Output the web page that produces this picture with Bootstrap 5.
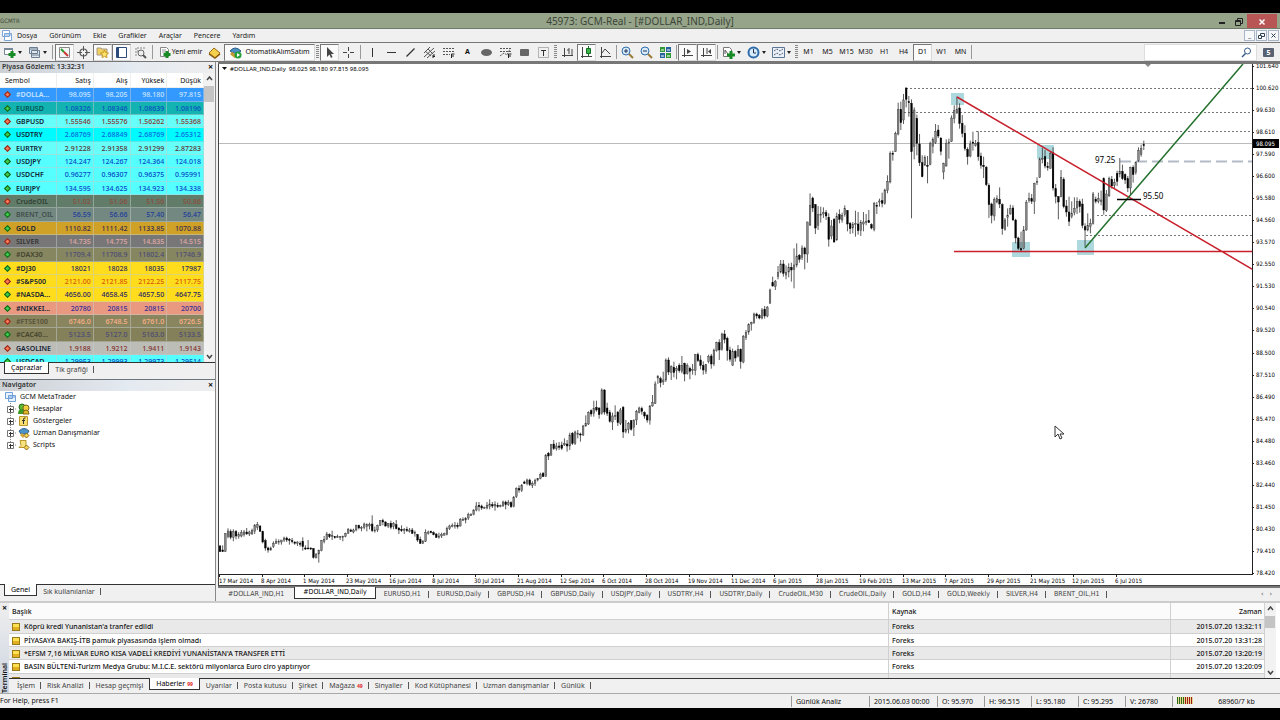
<!DOCTYPE html>
<html lang="tr">
<head>
<meta charset="utf-8">
<meta name="viewport" content="width=device-width, initial-scale=1">
<title>45973: GCM-Real - [#DOLLAR_IND,Daily]</title>
<link href="https://cdn.jsdelivr.net/npm/bootstrap@5.3.0/dist/css/bootstrap.min.css" rel="stylesheet">
<style>
:root{--ui:"Noto Sans","Open Sans",sans-serif;--narrow:"DejaVu Sans Condensed","DejaVu Sans",sans-serif}
body{background:#000;color:#111;font:7px/12px var(--ui);height:100vh;padding:13px 0 12px;overflow:hidden}
button{font:inherit;color:inherit;background:none;border:0;padding:0}
a{color:inherit;text-decoration:none}
.app{background:#f0f0f0}
.titlebar{background:#96a48a;height:16px;border-bottom:1px solid #707a68;font-size:10px;color:#3c4438}
.brandbit{width:67px}
.winbtn{width:17px;height:14px;line-height:12px}
.winbtn.close-x{width:30px;background:#b85555;color:#fff;margin-right:3px}
.menubar{height:14px;border-bottom:1px solid #777;color:#222}
.menubar a{margin-right:12px}
.mdi{width:11px;height:11px;border:1px solid #a8b4c8;background:#f6f8fb;line-height:8px;color:#345;margin-right:1px}
.tools{height:18px}
.tbtn{width:19px;height:17px;display:flex;align-items:center;justify-content:center;flex:none}
.tbtn svg{width:13px;height:13px;flex:none}
.tbtn.drop{width:25px;gap:2px}
.tbtn.drop::after{content:"";border:2px solid transparent;border-top:3px solid #222;border-bottom:0}
.tbtn.on{background:#fafafa;border:1px solid #d8d8d8;border-top-color:#777;border-left-color:#777}
.tbtn.order{width:50px;gap:1px}
.tbtn.auto{width:91px;gap:3px}
.sep5,.sep3{height:14px;flex:none;background:linear-gradient(#999,#999) center/1px 100% no-repeat}
.sep5{width:5px}.sep3{width:3px}
.grip{width:5px;height:14px;flex:none;background:repeating-linear-gradient(#888 0 1px,transparent 1px 2px) center/3px 100% no-repeat}
.find{width:113px;height:17px;border:1px solid #ddd;background:#fff}
.find input{border:0;outline:0;width:96px;font-size:8px;height:14px;padding:0 4px}
.chatn{background:#596273;color:#fff;width:11px;height:9px;line-height:9px;font-size:7px;font-weight:700;text-align:center;border-radius:1px;margin:0 6px}
.edge{height:1px;background:#777;flex:none}
.work{border-top:2px solid #777;margin-left:2px;min-width:0}
.side{width:216px;border-right:1px solid #888}
.panel-head{height:11px;line-height:10px;background:linear-gradient(90deg,#ccd0d5,#e4eaf1 60%,#eee);color:#333;font-weight:600;padding-left:2px}
.xbtn{width:9px;height:9px;line-height:8px;font-size:9px;font-weight:700;color:#111}
.watch{height:289px;overflow:hidden;background:#fff}
.grid-t{border-collapse:separate;border-spacing:0;table-layout:fixed;width:100%}
.grid-t th,.grid-t td{padding:0 2px;white-space:nowrap;overflow:hidden;line-height:11px;font-weight:400;border-right:1px solid #c4cccc80;border-bottom:1px solid #c4cccc80}
.grid-t tr{height:13px}
.grid-t tbody tr:nth-child(3n+1){height:14px}
.quotes td,.quotes th{text-align:right}
.quotes thead tr{height:15px}
.quotes thead th{border-color:#eee}
.quotes tbody th{font-weight:600;color:#222}
.quotes tbody td{font-weight:500}
.quotes tr>:first-child{text-align:left;padding-left:5px;width:57px}
.dm{display:inline-block;width:5px;height:5px;border:1px solid #155f15;background:#3bd04b;transform:rotate(45deg);margin:0 6px 0 0}
.dm.dn{background:#ff7a55;border-color:#8a2418}
.scroll{width:11px;background:#f2f2f2;flex:none;padding:2px 0}
.scroll i{display:block;width:10px;background:#c4c4c4}
.scroll svg{width:7px;height:5px;display:block;margin:1px auto}
.tabs{height:13px;border-top:1px solid #333;background:#f0f0f0;color:#444}
.tabs button{padding:0 6px;height:12px;line-height:11px;position:relative;white-space:nowrap;flex:none}
.tabs button::after{content:"";position:absolute;right:0;top:3px;height:7px;border-right:1px solid #555}
.tabs .cur{background:#fff;border:1px solid #333;border-top:0;color:#000;margin-top:-1px;height:12px}
.tabs .cur::after,.tabs .nosep::after{display:none}
.tree{list-style:none;margin:0;padding:0 0 0 5px;background:#fff;color:#111}
.tree li{height:12px;display:flex;align-items:center}
.tree svg{flex:none}
.chart{border:1px solid #444;border-right:0;border-top:0;background:#fff;min-height:0}
.chart svg{display:block}
#plot{min-width:0}
.ctabs{font-family:var(--narrow);background:#f0f0f0;border-top:2px solid #777;height:15px}
.ctabs button{height:12px;padding:0 8px}
.ctabs .nosep{padding:0 10px}
.axis{width:28px;flex:none}
.lab{font-family:var(--narrow);font-size:6px}
.term{border-top:2px solid #ccc;height:92px}
.strip{width:9px;background:linear-gradient(#eee,#cdd5e2);flex:none}
.vert{writing-mode:vertical-rl;transform:rotate(180deg);font-weight:600;line-height:9px}
.news{overflow:hidden;height:75px;background:#fff}
.news .grid-t thead tr{height:17px;background:#fbfbfb}
.news .grid-t tbody tr:nth-child(odd){background:#e9e9e9}
.news .grid-t th,.news .grid-t td{border-color:#d0d0d0;padding-left:3px;font-weight:500;color:#111}
.news .when{width:94px;text-align:right}
.news .src{width:282px}
.nt{display:inline-block;width:8px;height:8px;background:linear-gradient(#ffe050 50%,#e0b020 50%);border:1px solid #9a7a18;margin-right:4px;vertical-align:-2px}
.tabs sub{color:#d22;font-size:5px;font-weight:700;bottom:0;margin-left:2px}
.status{height:15px;border-top:1px solid #aaa}
.status .cell{padding-left:4px;border-left:1px solid #999;height:11px;line-height:11px;white-space:nowrap}
.s78{width:78px}.s68{width:68px}.s47{width:47px}.s108{width:108px}
</style>
</head>
<body class="d-flex flex-column m-0">
<div class="app d-flex flex-column flex-grow-1">
<header class="titlebar d-flex align-items-center">
  <span class="lab brandbit">GCMTR</span>
  <div class="flex-grow-1 text-center">45973: GCM-Real - [#DOLLAR_IND,Daily]</div>
  <button class="winbtn" aria-label="Minimize"><svg width="8" height="8"><path d="M1 5h6" stroke="#222" stroke-width="2"/></svg></button>
  <button class="winbtn" aria-label="Restore"><svg width="8" height="8"><path d="M.5 2.500h5v5h-5zM2.500 2V.5h5v5H6M.5 3.500h5" fill="none" stroke="#222"/></svg></button>
  <button class="winbtn close-x" aria-label="Close"><svg width="8" height="8"><path d="M1.500 1.500l5 5m0-5l-5 5" stroke="#fff" stroke-width="1.500"/></svg></button>
</header>
<nav class="menubar d-flex align-items-center">
  <svg class="me-1" width="13" height="11"><path d="M2.500.5h7v6h-7zM4.500 3.500h7v7h-7z" fill="#fff" stroke="#79a6d8"/><path d="M5 5h6" stroke="#79a6d8"/></svg>
  <a href="#">Dosya</a><a href="#">Görünüm</a><a href="#">Ekle</a><a href="#">Grafikler</a><a href="#">Araçlar</a><a href="#">Pencere</a><a href="#">Yardım</a>
  <span class="flex-grow-1"></span>
  <button class="mdi" aria-label="Minimize child">_</button><button class="mdi" aria-label="Restore child"><svg class="d-block mx-auto" width="7" height="7"><path d="M.5 3.500h3v3h-3zM2.500 3V1.500h4v3H4" fill="none" stroke="#345"/></svg></button><button class="mdi" aria-label="Close child"><svg class="d-block mx-auto" width="7" height="7"><path d="M1.500 1.500l4 4m0-4l-4 4" stroke="#345"/></svg></button>
</nav>
<div class="tools d-flex align-items-center">
  <button class="tbtn drop" aria-label="New chart"><svg viewBox="0 0 13 13"><path d="M1.500 2.500h8v6h-8z" fill="#fff" stroke="#789"/><path d="M1 3h9" stroke="#789" stroke-width="2"/><path d="M9 5v7M5.500 8.500h7" stroke="#168a24" stroke-width="3"/></svg></button>
  <button class="tbtn drop" aria-label="Profiles"><svg viewBox="0 0 13 13"><path d="M3.500 4.500h8v7h-8zM1.500 1.500h8v6h-8z" fill="#dfe6ee" stroke="#6c7e92"/><path d="M1 3h9M3 9h9" stroke="#6c7e92"/></svg></button>
  <span class="sep5"></span>
  <button class="tbtn on" aria-label="Market Watch"><svg viewBox="0 0 13 13"><path d="M1.500 1.500h10v10h-10z" fill="#f5f5f5" stroke="#888"/><path d="M3 3l3 3" stroke="#2a9a2a" stroke-width="2"/><path d="M6 6l4 4" stroke="#c33" stroke-width="2"/></svg></button>
  <button class="tbtn" aria-label="Data window"><svg viewBox="0 0 13 13"><circle cx="6.500" cy="6.500" r="3.500" fill="none" stroke="#555" stroke-width="1.200"/><path d="M6.500 0v5m0 3v5M0 6.500h5m3 0h5" stroke="#555"/></svg></button>
  <button class="tbtn on" aria-label="Navigator"><svg viewBox="0 0 13 13"><path d="M1 2h4l1 1h5v6H1z" fill="#f0d060" stroke="#a98"/><path d="M8.500 4l1.200 2.600 2.800.3-2 2 .5 2.800-2.500-1.300L6 11.700 6.500 9l-2-2 2.800-.4z" fill="#ffe36b" stroke="#b98a10" stroke-width=".8"/></svg></button>
  <button class="tbtn on" aria-label="Terminal"><svg viewBox="0 0 13 13"><path d="M1.500 1.500h10v10h-10z" fill="#fff" stroke="#2c4a7c"/><path d="M2 2h2v9H2z" fill="#2c4a7c"/></svg></button>
  <button class="tbtn" aria-label="Strategy tester"><svg viewBox="0 0 13 13"><path d="M2 10V2h9M4 4v2m2-2v3m2-3v2" stroke="#888" stroke-dasharray="2 1" fill="none"/><circle cx="7" cy="7" r="3" fill="#eee" stroke="#666"/><path d="M9 9l3 3" stroke="#555" stroke-width="2"/></svg></button>
  <span class="sep5"></span>
  <button class="tbtn order"><svg viewBox="0 0 13 13"><path d="M2.500 1.500h6l2 2v7h-8z" fill="#fff" stroke="#888"/><path d="M4 4h4M4 6h4" stroke="#999"/><path d="M9 5v7M5.500 8.500h7" stroke="#168a24" stroke-width="3"/></svg>Yeni emir</button>
  <button class="tbtn" aria-label="MetaEditor"><svg viewBox="0 0 13 13"><path d="M1 7l5-5 6 5-5 5z" fill="#f5cf4e" stroke="#9a6c10"/><path d="M1 8l6 4 5-4" fill="none" stroke="#8a5c10" stroke-width="1.500"/></svg></button>
  <button class="tbtn auto on"><svg viewBox="0 0 13 13"><path d="M1 5q5-6 11 0l-3 2H4z" fill="#4c8fc4" stroke="#2d5c86"/><path d="M2 7l5 4" stroke="#c49a30" stroke-width="3"/><circle cx="9" cy="9" r="3.500" fill="#24a038"/><path d="M8 7v4l3-2z" fill="#fff"/></svg>OtomatikAlımSatım</button>
  <span class="grip"></span>
  <button class="tbtn on" aria-label="Cursor"><svg viewBox="0 0 13 13"><path d="M4 1v10l2.500-2.500L8 12l1.500-1L8 8h3z" fill="#444"/></svg></button>
  <button class="tbtn" aria-label="Crosshair"><svg viewBox="0 0 13 13"><path d="M6.500 1v4m0 3v4M1 6.500h4m3 0h4" stroke="#444"/></svg></button>
  <span class="sep5"></span>
  <button class="tbtn" aria-label="Vertical line"><svg viewBox="0 0 13 13"><path d="M6.500 2v9" stroke="#333"/></svg></button>
  <button class="tbtn" aria-label="Horizontal line"><svg viewBox="0 0 13 13"><path d="M2 6.500h9" stroke="#333"/></svg></button>
  <button class="tbtn" aria-label="Trendline"><svg viewBox="0 0 13 13"><path d="M2.500 10.500l8-8" stroke="#333" stroke-width="1.200"/></svg></button>
  <button class="tbtn" aria-label="Channel"><svg viewBox="0 0 13 13"><path d="M1 7l6-6M1 11l10-9M4 12l8-7M2 5l6 5M5 3l5 5" stroke="#555"/><path d="M10 12V9h2M10 10.500h2" stroke="#222" fill="none"/></svg></button>
  <button class="tbtn" aria-label="Fibonacci"><svg viewBox="0 0 13 13"><path d="M1 2.500h11M1 5.500h11M1 8.500h7" stroke="#555" stroke-dasharray="2 1"/><path d="M9.500 12V8h3M9 10h3" stroke="#222" fill="none"/></svg></button>
  <button class="tbtn fw-bold" aria-label="Text">A</button>
  <button class="tbtn" aria-label="Ellipse"><svg viewBox="0 0 13 13"><ellipse cx="6.500" cy="6.500" rx="5.500" ry="3.500" fill="#666"/></svg></button>
  <button class="tbtn" aria-label="Fibonacci fan"><svg viewBox="0 0 13 13"><path d="M1 2.500h11M1 5.500h11M1 10l4-3 3 2 3-6" stroke="#555" stroke-dasharray="2 1" fill="none"/><path d="M9.500 12V8h3M9 10h3" stroke="#222" fill="none"/></svg></button>
  <button class="tbtn" aria-label="Rectangle"><svg viewBox="0 0 13 13"><rect x="2" y="3" width="9" height="7" rx="1" fill="#666"/></svg></button>
  <button class="tbtn" aria-label="Label"><svg viewBox="0 0 13 13"><path d="M1.500 1.500h10v10h-10z" fill="none" stroke="#777" stroke-dasharray="1 1"/><path d="M4 4.500h5M6.500 4v6" stroke="#333"/></svg></button>
  <span class="grip"></span>
  <button class="tbtn" aria-label="Bar chart"><svg viewBox="0 0 13 13"><path d="M3.500 2v9M1 9.500h11M6 4h2m0-2v6m3-5v7" stroke="#444" fill="none"/></svg></button>
  <button class="tbtn on" aria-label="Candlesticks"><svg viewBox="0 0 13 13"><path d="M2.500 1v11M1 10.500h11" stroke="#444"/><path d="M8.500 0v10" stroke="#186c22"/><path d="M6.500 2.500h4v5h-4z" fill="#38b548" stroke="#186c22"/></svg></button>
  <button class="tbtn" aria-label="Line chart"><svg viewBox="0 0 13 13"><path d="M2.500 1v11M1 10.500h11M3 7l3-4 5 5" stroke="#444" fill="none"/></svg></button>
  <span class="sep3"></span>
  <button class="tbtn" aria-label="Zoom in"><svg viewBox="0 0 13 13"><circle cx="5" cy="5" r="4" fill="#d7ebfb" stroke="#2f6cab"/><path d="M3 5h4M5 3v4" stroke="#235"/><path d="M8 8l4 4" stroke="#987a38" stroke-width="2"/></svg></button>
  <button class="tbtn" aria-label="Zoom out"><svg viewBox="0 0 13 13"><circle cx="5" cy="5" r="4" fill="#d7ebfb" stroke="#2f6cab"/><path d="M3 5h4" stroke="#235"/><path d="M8 8l4 4" stroke="#987a38" stroke-width="2"/></svg></button>
  <button class="tbtn" aria-label="Tile windows"><svg viewBox="0 0 13 13"><path d="M1 1h5v5H1zM7 7h5v5H7z" fill="#2f9a34"/><path d="M7 1h5v5H7zM1 7h5v5H1z" fill="#28649c"/><path d="M2 4h3m3 0h3M2 10h3m3 0h3" stroke="#fff"/></svg></button>
  <span class="sep3"></span>
  <button class="tbtn on" aria-label="Auto scroll"><svg viewBox="0 0 13 13"><path d="M3.500 2v9M1 9.500h11" stroke="#444"/><path d="M6 3v5l4-2.500z" fill="#444"/></svg></button>
  <button class="tbtn on" aria-label="Chart shift"><svg viewBox="0 0 13 13"><path d="M3.500 2v9M1 9.500h11M7 2v6" stroke="#444"/><path d="M11 3v5L8 5.500z" fill="#444"/></svg></button>
  <span class="sep3"></span>
  <button class="tbtn drop" aria-label="Indicators"><svg viewBox="0 0 13 13"><path d="M1.500 1.500h6l2 2v7h-8z" fill="#fff" stroke="#777"/><path d="M3 8V4l3 4" stroke="#555" fill="none"/><path d="M9 5v8M5 9h8" stroke="#168a24" stroke-width="3"/></svg></button>
  <button class="tbtn drop" aria-label="Periods"><svg viewBox="0 0 13 13"><circle cx="6.500" cy="6.500" r="5" fill="#d9ecfb" stroke="#2f6cab" stroke-width="2"/><path d="M6.500 3v4H9" stroke="#235" fill="none"/></svg></button>
  <button class="tbtn drop" aria-label="Templates"><svg viewBox="0 0 13 13"><path d="M.5 1.500h12v10H.5z" fill="#eaf1f8" stroke="#5c7694"/><path d="M2 5l3-2 3 2 3-2M2 9l3-2 3 2 3-2" stroke="#556" fill="none" stroke-dasharray="2 1"/></svg></button>
  <span class="grip"></span>
  <button class="tbtn">M1</button><button class="tbtn">M5</button><button class="tbtn">M15</button><button class="tbtn">M30</button><button class="tbtn">H1</button><button class="tbtn">H4</button><button class="tbtn on">D1</button><button class="tbtn">W1</button><button class="tbtn">MN</button>
  <span class="sep3"></span>
  <div class="find d-flex align-items-center ms-auto"><input type="text" aria-label="Ara"><svg width="11" height="11" viewBox="0 0 11 11"><circle cx="6.500" cy="4" r="3" fill="none" stroke="#345a8a"/><path d="M4.500 6.500L1 10" stroke="#345a8a" stroke-width="1.500"/></svg></div>
  <span class="chatn">5</span>
</div>
<div class="edge"></div>
<main class="d-flex flex-grow-1">
  <aside class="side d-flex flex-column flex-shrink-0">
    <div class="panel-head d-flex justify-content-between">Piyasa Gözlemi: 13:32:31<button class="xbtn" aria-label="Kapat">×</button></div>
    <div class="watch d-flex">
      <div class="flex-grow-1"><table class="grid-t quotes"><thead><tr><th>Sembol</th><th>Satış</th><th>Alış</th><th>Yüksek</th><th>Düşük</th></tr></thead><tbody id="quotes"></tbody></table></div>
      <div class="scroll d-flex flex-column"><svg viewBox="0 0 7 5"><path d="M1 4l2.500-3L6 4" fill="none" stroke="#444" stroke-width="1.500"/></svg><i class="pt-3 mt-1"></i><svg class="mt-auto" viewBox="0 0 7 5"><path d="M1 1l2.500 3L6 1" fill="none" stroke="#444" stroke-width="1.500"/></svg></div>
    </div>
    <div class="tabs d-flex ps-1"><button class="cur">Çaprazlar</button><button>Tik grafiği</button></div>
    <div class="border-bottom border-secondary pt-1"></div>
    <div class="panel-head d-flex justify-content-between">Navigator<button class="xbtn" aria-label="Kapat">×</button></div>
    <ul class="tree flex-grow-1">
      <li><svg class="me-1" width="11" height="11"><path d="M.5.5h7v6h-7zM3.500 3.500h7v6h-7z" fill="#eaf4ff" stroke="#6fa0d8"/><path d="M4 5h6" stroke="#6fa0d8"/></svg>GCM MetaTrader</li>
      <li><svg width="28" height="12"><path d="M5.500 0v12M8 6h4" stroke="#888" stroke-dasharray="1 1"/><path d="M2.500 3.500h6v6h-6z" fill="#fff" stroke="#777"/><path d="M4 6.500h4M5.500 5v4" stroke="#333"/><circle cx="17" cy="4" r="3" fill="#5bbb33" stroke="#286a18"/><path d="M13 11q0-5 4-5t4 5z" fill="#3d9a24"/><circle cx="21" cy="5" r="3" fill="#f2cf3e" stroke="#80651a"/><path d="M18 11q0-4 3-4t3 4z" fill="#e5b92a" stroke="#80651a"/></svg>Hesaplar</li>
      <li><svg width="28" height="12"><path d="M5.500 0v12M8 6h4" stroke="#888" stroke-dasharray="1 1"/><path d="M2.500 3.500h6v6h-6z" fill="#fff" stroke="#777"/><path d="M4 6.500h4M5.500 5v4" stroke="#333"/><path d="M14.500 1.500h8v9h-8z" fill="#f8df72" stroke="#bb9530"/><path d="M20.500 3q-2-1-2 2v4M17 5.500h3" stroke="#333" fill="none"/></svg>Göstergeler</li>
      <li><svg width="28" height="12"><path d="M5.500 0v12M8 6h4" stroke="#888" stroke-dasharray="1 1"/><path d="M2.500 3.500h6v6h-6z" fill="#fff" stroke="#777"/><path d="M4 6.500h4M5.500 5v4" stroke="#333"/><path d="M14 4q5-5 10 0l-2 3h-6z" fill="#4c93ca" stroke="#2c608c"/><path d="M16 7l3 3" stroke="#d4a83e" stroke-width="3"/><path d="M21.500 6l2.500 2.500-2.500 2.500L19 8.500z" fill="#f5d557" stroke="#8a6c18"/></svg>Uzman Danışmanlar</li>
      <li><svg width="28" height="12"><path d="M5.500 0v7M8 6h4" stroke="#888" stroke-dasharray="1 1"/><path d="M2.500 3.500h6v6h-6z" fill="#fff" stroke="#777"/><path d="M4 6.500h4M5.500 5v4" stroke="#333"/><path d="M15 1.500h6v7h-7l2-2z" fill="#f7e37e" stroke="#b9962e"/><path d="M21.500 6l2.500 2.500-2.500 2.500L19 8.500z" fill="#f5d557" stroke="#8a6c18"/></svg>Scripts</li>
    </ul>
    <div class="tabs d-flex ps-1"><button class="cur">Genel</button><button>Sık kullanılanlar</button></div>
    <div class="pt-1"></div>
  </aside>
  <section class="work d-flex flex-column flex-grow-1">
    <div class="chart d-flex flex-grow-1">
      <svg id="plot" class="flex-grow-1" height="100%" role="img" aria-label="#DOLLAR_IND günlük grafik"></svg>
      <svg id="axis" class="axis" height="100%"></svg>
    </div>
    <div class="tabs ctabs d-flex" id="ctabs"></div>
  </section>
</main>
<section class="term d-flex flex-shrink-0">
  <div class="strip d-flex flex-column justify-content-between align-items-center"><button class="xbtn" aria-label="Kapat">×</button><span class="vert">Terminal</span></div>
  <div class="flex-grow-1">
    <div class="d-flex news"><div class="flex-grow-1"><table class="grid-t"><thead><tr><th>Başlık</th><th class="src">Kaynak</th><th class="when">Zaman</th></tr></thead><tbody>
      <tr><td><span class="nt"></span>Köprü kredi Yunanistan'a tranfer edildi</td><td>Foreks</td><td class="when">2015.07.20 13:32:11</td></tr>
      <tr><td><span class="nt"></span>PİYASAYA BAKIŞ-İTB pamuk piyasasında işlem olmadı</td><td>Foreks</td><td class="when">2015.07.20 13:31:28</td></tr>
      <tr><td><span class="nt"></span>*EFSM 7,16 MİLYAR EURO KISA VADELİ KREDİYİ YUNANİSTAN'A TRANSFER ETTİ</td><td>Foreks</td><td class="when">2015.07.20 13:20:19</td></tr>
      <tr><td><span class="nt"></span>BASIN BÜLTENİ-Turizm Medya Grubu: M.I.C.E. sektörü milyonlarca Euro ciro yaptırıyor</td><td>Foreks</td><td class="when">2015.07.20 13:20:09</td></tr>
      <tr><td><span class="nt"></span></td><td></td><td></td></tr></tbody></table></div>
      <div class="scroll d-flex flex-column me-1"><svg viewBox="0 0 7 5"><path d="M1 4l2.500-3L6 4" fill="none" stroke="#444" stroke-width="1.500"/></svg><i class="pt-2 pb-1 mt-1"></i><svg class="mt-auto" viewBox="0 0 7 5"><path d="M1 1l2.500 3L6 1" fill="none" stroke="#444" stroke-width="1.500"/></svg></div></div>
    <div class="tabs d-flex"><button class="ps-2">İşlem</button><button>Risk Analizi</button><button class="nosep">Hesap geçmişi</button><button class="cur">Haberler<sub>99</sub></button><button>Uyarılar</button><button>Posta kutusu</button><button>Şirket</button><button>Mağaza<sub>49</sub></button><button>Sinyaller</button><button>Kod Kütüphanesi</button><button>Uzman danışmanlar</button><button>Günlük</button></div>
  </div>
</section>
<footer class="status d-flex align-items-center flex-shrink-0">
  <span class="flex-grow-1">For Help, press F1</span>
  <span class="cell s78">Günlük Analiz</span><span class="cell s68">2015.06.03 00:00</span><span class="cell s47">O: 95.970</span><span class="cell s47">H: 96.515</span><span class="cell s47">L: 95.180</span><span class="cell s47">C: 95.295</span><span class="cell s47">V: 26780</span>
  <span class="cell s108 d-flex"><svg width="16" height="9"><path d="M0 1h16v7H0z" fill="#e8d890"/><path d="M.5 1v7m2-7v7m2-7v7m2-7v7" stroke="#2f6a18"/><path d="M8.500 1v7m2-7v7m2-7v7m2-7v7" stroke="#a01818"/></svg><span class="flex-grow-1 text-center">68960/7 kb</span></span>
</footer>
</div>
<script>
// symbol | bid | ask | high | low | row colour | quote colour | direction | symbol colour
const rows = `#DOLLA...|98.095|98.205|98.180|97.815|#3399ff|#c9e4ff|d|#c9e4ff
EURUSD|1.08326|1.08346|1.08639|1.08196|#12b3b0|#0a50c0|u|#06514f
GBPUSD|1.55546|1.55576|1.56262|1.55368|#66fffa|#8a3030|d
USDTRY|2.68769|2.68849|2.68769|2.65312|#00fbff|#0a68e0|u
EURTRY|2.91228|2.91358|2.91299|2.87283|#66fffa|#5c3034|d
USDJPY|124.247|124.267|124.364|124.018|#55ffff|#0846c8|u
USDCHF|0.96277|0.96307|0.96375|0.95991|#55ffff|#0846c8|u
EURJPY|134.595|134.625|134.923|134.338|#55ffff|#0846c8|u
CrudeOIL|51.02|51.06|51.56|50.86|#627c6a|#8c4c3c|d|#2f4034
BRENT_OIL|56.59|56.66|57.40|56.47|#748882|#1c3c9c|u|#3e4e48
GOLD|1110.82|1111.42|1133.85|1070.88|#cfa127|#3a2c50|u
SILVER|14.735|14.775|14.835|14.515|#777777|#e0a8a4|d|#333
#DAX30|11709.4|11708.9|11802.4|11746.9|#868660|#4c4c78|u|#444430
#DJ30|18021|18028|18035|17987|#ffdc1c|#2c2c5c|u
#S&amp;P500|2121.00|2121.85|2122.25|2117.75|#ffdc1c|#d8580c|d
#NASDA...|4656.00|4658.45|4657.50|4647.75|#ffdc1c|#242468|u
#NIKKEI...|20780|20815|20815|20700|#e8997f|#342c98|u
#FTSE100|6746.0|6748.5|6761.0|6726.5|#88855f|#ffb088|d|#55503a
#CAC40...|5123.5|5127.0|5163.0|5133.5|#83805a|#4c4c78|u|#44442c
GASOLINE|1.9188|1.9212|1.9411|1.9143|#bdbdb8|#80302c|d
USDCAD|1.29953|1.29993|1.29973|1.29514|#55ffff|#0846c8|u`.split('\n').map(r => r.split('|'));
document.getElementById('quotes').innerHTML = rows.map(r =>
  `<tr style="background:${r[5]};color:${r[6]}"><th style="color:${r[8] || '#123'}"><span class="dm ${r[7] == 'd' ? 'dn' : ''}"></span>${r[0]}</th>${r.slice(1,5).map(v => `<td>${v}</td>`).join('')}</tr>`).join('');

document.getElementById('ctabs').innerHTML = '#DOLLAR_IND,H1|#DOLLAR_IND,Daily|EURUSD,H1|EURUSD,Daily|GBPUSD,H4|GBPUSD,Daily|USDJPY,Daily|USDTRY,H4|USDTRY,Daily|CrudeOIL,M30|CrudeOIL,Daily|GOLD,H4|GOLD,Weekly|SILVER,H4|BRENT_OIL,H1'
  .split('|').map((t, i) => `<button class="${i == 1 ? 'cur' : i == 0 ? 'nosep' : ''}">${t}</button>`).join('') + '<span class="ms-auto pe-2">‹ &nbsp; ›</span>';

// Daily bars as "high open close low", downward distances in thirds of a pixel from each run's origin
const runs = [[1008, `435 438 455 455,436 450 455 455,400 455 400 455,385 410 393 415,388 395 412 418,388 412 395 424,390 395 408 418,396 410 404 416,390 408 398 412,390 404 396 410,384 396 402 404,392 402 396 408,386 402 392 404,372 394 376 402,366 382 374 390,376 378 394 396,392 394 426 430,416 422 444 452,440 444 450 458,440 450 444 452,424 440 430 444,416 430 424 432,418 426 424 434,420 426 420 434,410 420 414 426,410 414 420 426,414 418 420 434,414 422 424 430,424 426 430 434,424 430 426 438,424 430 430 440,412 424 440 452,436 444 444 450,420 444 444 446,442 444 446 450,444 446 472 476,460 474 462 474,450 462 450 488,420 452 422 454,408 424 418 430,396 418 402 420,400 404 410 414,392 410 406 420,408 410 412 416,404 412 410 414,408 412 410 420,408 412 408 424,398 410 400 412,384 400 388 402,386 390 394 396,386 396 390 400,374 390 376 394,374 376 384 388,378 384 382 394,368 382 372 388,370 380 374 394,368 378 374 388,346 372 392 396,380 392 390 398,374 390 376 396,360 376 362 378,356 362 366 376,364 366 378 380,370 378 370 384,362 370 382 388,366 380 370 388,360 374 386 388,382 384 390 402,376 388 392 396,384 392 388 402,380 388 392 396,384 394 390 398,384 390 400 402,392 400 398 410,402 404 420 426,410 418 430 432,420 430 424 432,388 424 398 426,392 400 396 404,392 394 398 400,394 398 404 406,400 402 412 414,398 412 408 416,398 408 404 414,398 406 400 406,380 404 386 406,374 386 378 390,370 380 376 382,366 378 376 386,368 376 380 386,354 378 358 380,352 360 358 362,352 360 354 370,338 354 344 360,340 346 344 348,328 344 330 346,306 330 318 334,306 316 320 334,314 318 324 330,320 324 322 326,306 324 316 328,298 320 312 328,306 314 318 324,304 318 314 332,308 316 320 324,314 320 316 322,302 318 306 320,302 306 314 328,300 314 308 318,304 308 320 324,288 320 292 322,262 290 266 294,256 266 270 278,252 272 256 276,242 246 250 252,236 250 240 256,236 240 254 258,244 256 250 264,236 250 242 258,234 240 236 244,218 236 224 238,216 220 230 230,162 230 166 230,156 160 168 180,132 166 134 166,120 132 146 150,128 146 138 152,126 138 142 150`],
[348, `785 795 805 810,775 795 790 798,780 792 798 815,758 798 765 810,756 760 790 795,752 790 756 795,750 762 760 775,758 762 764 785,735 765 738 768,706 738 730 740,694 732 698 735,688 692 702 710,662 700 685 710,662 682 690 695,682 684 704 716,625 700 630 704,628 630 696 704,668 684 700 708,690 698 724 728,698 726 708 750,676 710 706 720,694 696 728 738,684 730 690 735,678 682 756 774,720 755 748 760,726 748 730 760,720 722 748 752,718 742 722 768,690 720 695 735,680 698 684 700,680 686 694 704,694 698 708 716,702 706 720 728,675 722 678 734,645 678 668 680,604 670 612 672,586 594 588 612,590 596 608 622,575 606 600 615,535 600 540 606,532 540 576 585,556 578 560 600,545 562 578 592,558 572 566 598,550 556 572 578,528 575 556 580,548 550 582 604,550 580 556 584,560 565 574 598,552 570 568 584,522 572 524 586,518 524 542 546,526 540 556 568,544 556 570 584,552 574 554 582,524 545 530 550,522 528 552 566,506 552 510 558,485 512 488 515,478 488 510 540,458 508 462 512,450 462 478 490,470 475 512 542,500 510 538 545,506 556 515 558,510 514 534 545,495 528 508 532,505 508 545 566,465 546 470 550,450 472 458 480,430 456 434 464,425 432 428 452,398 428 402 432,398 402 408 416,402 406 414 418,384 414 390 418,378 388 408 416,378 408 382 412,326 370 330 370,290 308 318 320,300 320 304 330,258 290 278 298,240 276 252 280,240 252 280 290,256 285 278 298,250 276 262 292,248 262 270 305,205 268 255 325,190 255 228 262,222 226 238 248,196 232 204 240,200 204 222 268,125 222 126 248,40 135 76 138,50 54 84 96,72 74 144 162,78 136 104 150,80 106 102 128,82 102 98 114,90 98 108 120,100 112 178 200,120 168 138 178,114 118 186 188,98 180 110 182,88 104 118 130`],
[-12, `458 480 466 488,436 464 446 470,450 452 492 514,486 490 506 522,486 504 494 520,452 494 490 530,456 492 512 524,480 512 488 528,456 492 486 514,462 486 484 496,450 482 488 488,490 494 504 508,426 508 430 514,426 436 436 462,416 425 423 440,398 422 430 442,386 430 390 434,346 392 364 400,274 366 280 370,272 280 282 302,215 275 220 276,128 222 148 226,125 148 188 210,102 180 120 192,82 84 118 142,108 125 128 170,118 130 275 475,142 260 150 298,164 175 250 286,222 252 308 318,286 308 350 352,286 315 292 318,288 316 318 370,245 314 250 316,232 260 238 280,192 248 215 252,195 210 228 234,232 234 274 286,308 336 310 358,238 318 250 320,236 250 246 296,166 244 174 246,136 176 152 190,110 158 148 162,130 144 190 206,165 190 220 232,196 220 266 272,262 268 290 314,242 288 252 292,215 246 250 272,240 256 250 260,214 248 290 302,278 288 316 326,290 316 320 354,318 322 374 378,370 376 434 474,428 432 466 490,412 468 418 482,406 426 416 430,382 418 432 444,430 434 506 524,474 508 480 512,445 472 466 500,434 462 446 464,436 444 480 482,476 480 534 550,530 534 565 570,515 566 570 574,498 565 510 568,420 510 428 512,398 422 415 428,402 416 424 432,368 425 370 462,352 368 364 375,292 352 298 354,264 298 296 310,270 290 318 325,306 320 322 332,275 325 280 326,262 278 384 392,372 386 410 430,408 410 426 478,330 410 352 412,352 358 440 445,420 438 456 470,410 456 484 498,424 470 460 475,412 458 445 466,412 444 424 462,418 425 440 458,416 432 496 505,490 500 510 560,460 510 496 514,476 500 490 520,396 490 402 494,410 418 424 430,398 424 416 430,392 425 420 436,352 356 450 464,390 452 402 456,350 408 356 410,348 358 378 386,356 376 368 385,332 340 364 378,294 342 334 352,314 334 356 360,340 344 360 372,348 356 384 396,320 384 322 404,316 322 344 368,304 338 308 344,262 302 272 306,254 284 266 290,242 254 256 270`]];
let n = 0, bars = '';
for (const [off, text] of runs) for (const bar of text.split(',')) {
  const [h, o, c, l] = bar.split(' ').map(v => +v + off), x = 3 + 8.01 * n++;
  bars += `<path d="M${x} ${h}V${l}" stroke="#333" stroke-width="2.4"/><rect x="${x - 2.5}" y="${Math.min(o, c)}" width="5" height="${Math.max(3, Math.abs(c - o))}" fill="${c >= o ? '#000' : '#888'}" stroke="${c >= o ? '#000' : '#333'}" stroke-width="1.2"/>`;
}
const dates = '17 Mar 2014,8 Apr 2014,1 May 2014,23 May 2014,16 Jun 2014,8 Jul 2014,30 Jul 2014,21 Aug 2014,12 Sep 2014,6 Oct 2014,28 Oct 2014,19 Nov 2014,11 Dec 2014,6 Jan 2015,28 Jan 2015,19 Feb 2015,13 Mar 2015,7 Apr 2015,29 Apr 2015,21 May 2015,12 Jun 2015,6 Jul 2015'.split(',');
const level = (x, y) => `<line x1="${x}" y1="${y}.5" x2="100%" y2="${y}.5" stroke="#777" stroke-dasharray="2 2"/>`;
document.getElementById('plot').innerHTML =
  `<g fill="#add8dd"><path d="M732 29h13v12h-13zM818 81h17v14h-17zM793 178h18v15h-18zM858 176h17v15h-17z"/></g>
  ${level(687, 24)}${level(685, 48)}${level(757, 67)}${level(878, 151)}${level(867, 171)}
  <line x1="0" y1="79.5" x2="100%" y2="79.5" stroke="#bbb"/>
  <line x1="901" y1="97.5" x2="100%" y2="97.5" stroke="#b5bac8" stroke-width="2" stroke-dasharray="11 5"/>
  <g transform="scale(.33333)">${bars}</g>
  <path d="M735 187.500H1033M738 33L1033 205" stroke="#c8202c" stroke-width="1.500"/>
  <path d="M866 184L1024 0" stroke="#24702c" stroke-width="1.500"/>
  <path d="M898 135.500h24" stroke="#000" stroke-width="1.500"/>
  <path d="M926 0h6l-3 3z" fill="#888"/><path d="M3 3h5l-2.500 3z" fill="#111"/>
  <text x="11" y="7" font-size="6" xml:space="preserve">#DOLLAR_IND,Daily  98.025 98.180 97.815 98.095</text>
  <text x="876" y="99" font-size="8">97.25</text><text x="924" y="135" font-size="8">95.50</text>
  <path d="M836 362v11l3-3 2 5 2-1-2-4h4z" fill="#fff" stroke="#333"/>
  <line x1="0" y1="510.5" x2="100%" y2="510.5" stroke="#222"/>` +
  dates.map((d, i) => `<path d="M${Math.round(i * 42.72)}.5 511v2" stroke="#222"/><text class="lab" x="${Math.round(i * 42.72) - (i ? 1 : 0)}" y="519">${d}</text>`).join('');
const prices = [101.64,100.62,99.63,98.61,97.59,96.6,95.58,94.56,93.57,92.55,91.53,90.54,89.52,88.5,87.51,86.49,85.47,84.48,83.46,82.44,81.45,80.43,79.41,78.42];
document.getElementById('axis').innerHTML = '<path d="M.5 0V511" stroke="#222"/>' + prices.map((p, i) => {
  const y = Math.round(2 + i * 22.04);
  return `<path d="M0 ${y}.5h2" stroke="#222"/><text class="lab" x="4" y="${y + 2}">${p.toFixed(3)}</text>`;
}).join('') + '<path d="M1 75h26v9H1z"/><text class="lab" x="4" y="82" fill="#fff">98.095</text>';
</script>
<script src="https://cdn.jsdelivr.net/npm/bootstrap@5.3.0/dist/js/bootstrap.bundle.min.js"></script>
</body>
</html>
